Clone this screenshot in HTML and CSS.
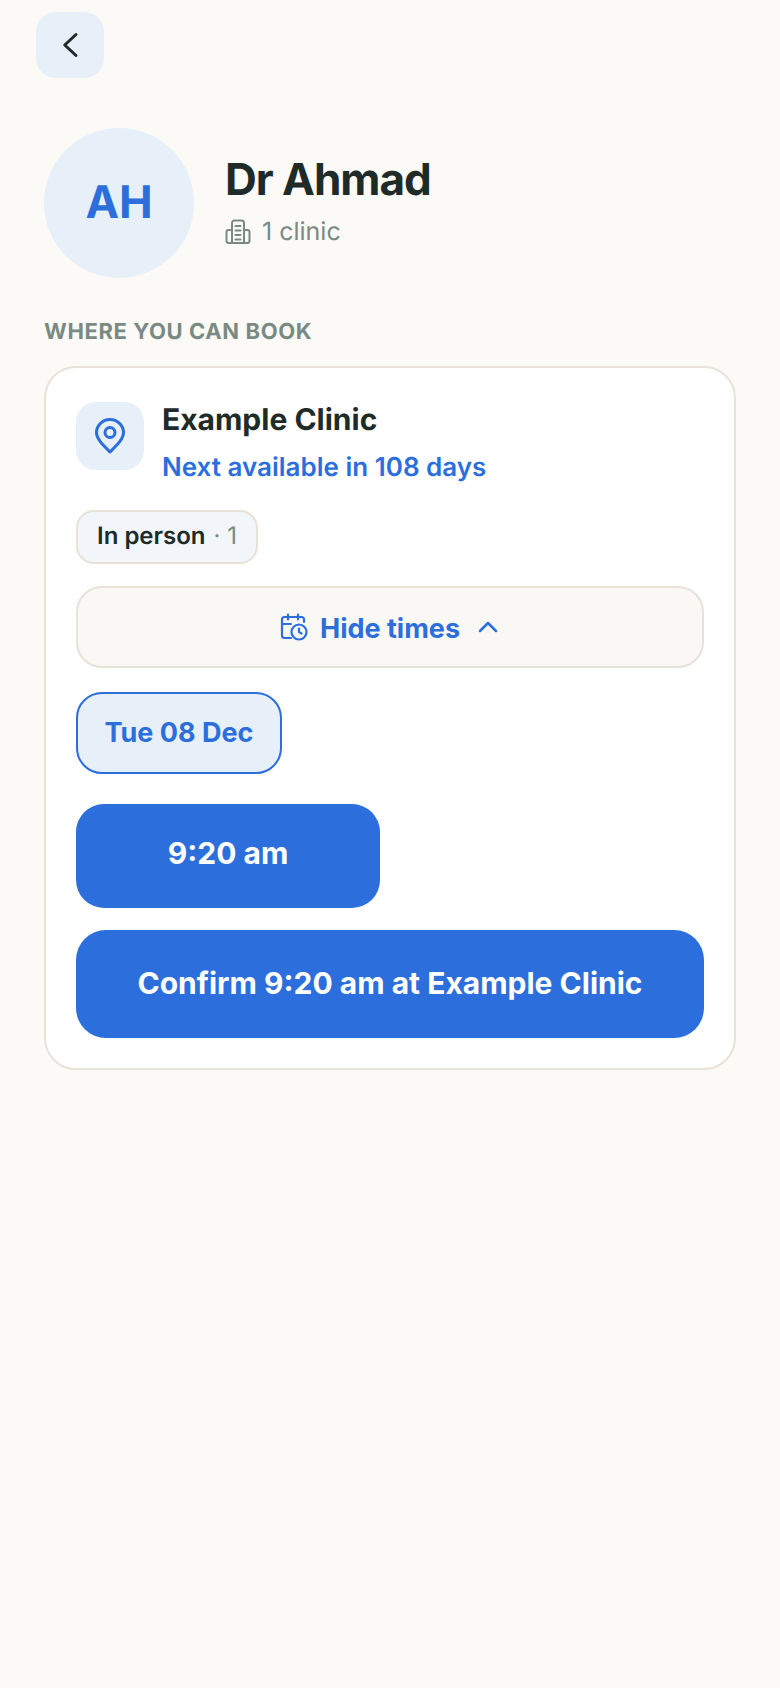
FILE: index.html
```html
<!DOCTYPE html>
<html>
<head>
  <title>Dr Ahmad</title>
  <meta charset="utf-8">
  <meta name="viewport" content="width=device-width,initial-scale=1.0">
  <link rel="stylesheet" href="styles.css">
</head>
<body>
  <div class="page">
    <button class="back-btn" type="button" aria-label="Back">
      <svg width="36" height="36" viewBox="0 0 24 24" fill="none" stroke="#1e2b28" stroke-width="2" stroke-linecap="round" stroke-linejoin="round"><path d="M16 5l-7.500 7 7.500 7"/></svg>
    </button>

    <div class="doctor">
      <div class="avatar">AH</div>
      <div class="doctor-info">
        <h1 class="doctor-name">Dr Ahmad</h1>
        <p class="doctor-sub">
          <svg width="26" height="26" viewBox="0 0 26 26" fill="none" stroke="#7a8a82" stroke-width="2" stroke-linecap="round" stroke-linejoin="round"><path d="M7 24V4a2.500 2.500 0 0 1 2.500-2.500h7A2.500 2.500 0 0 1 19 4v20"/><path d="M7 11H3.500A2 2 0 0 0 1.500 13v9a2 2 0 0 0 2 2h19a2 2 0 0 0 2-2v-9a2 2 0 0 0-2-2H19"/><path d="M10.500 7h5M10.500 11.500h5M10.500 16h5M10.500 20.500h5"/></svg>
          <span>1 clinic</span>
        </p>
      </div>
    </div>

    <h2 class="section-title">WHERE YOU CAN BOOK</h2>

    <div class="card">
      <div class="clinic">
        <div class="clinic-icon">
          <svg width="34" height="36" viewBox="0 0 34 36" fill="none" stroke="#2b6edc" stroke-width="3" stroke-linecap="round" stroke-linejoin="round"><path d="M17 34C10 27 3.500 21 3.500 14.500a13.500 13 0 0 1 27 0C30.500 21 24 27 17 34z"/><circle cx="17" cy="14.500" r="5"/></svg>
        </div>
        <div class="clinic-info">
          <div class="clinic-name">Example Clinic</div>
          <div class="clinic-next">Next available in 108 days</div>
        </div>
      </div>

      <div class="chips">
        <span class="chip">In person <span class="chip-count">· 1</span></span>
      </div>

      <button class="toggle-btn" type="button">
        <svg width="28" height="28" viewBox="0 0 28 28" fill="none" stroke="#2b6edc" stroke-width="2.200" stroke-linecap="round" stroke-linejoin="round"><path d="M11 25H4.500A2.500 2.500 0 0 1 2 22.500V6.500A2.500 2.500 0 0 1 4.500 4h17A2.500 2.500 0 0 1 24 6.500V9"/><path d="M8 1.500v5M18 1.500v5M2 11h9"/><circle cx="19" cy="19" r="7.500"/><path d="M19 15.500V19l2.500 1.500"/></svg>
        <span>Hide times</span>
        <svg class="toggle-chevron" width="24" height="24" viewBox="0 0 24 24" fill="none" stroke="#2b6edc" stroke-width="2.500" stroke-linecap="round" stroke-linejoin="round"><path d="M4 16l8-8 8 8"/></svg>
      </button>

      <button class="date-btn" type="button">Tue 08 Dec</button>

      <button class="time-btn" type="button">9:20 am</button>

      <button class="confirm-btn" type="button">Confirm 9:20 am at Example Clinic</button>
    </div>
  </div>
</body>
</html>
```

FILE: styles.css
```css
* {
  box-sizing: border-box;
}
body {
  margin: 0;
  background: #fbfaf6;
  font-family: Inter, "Liberation Sans", sans-serif;
  color: #1e2b28;
  text-rendering: geometricPrecision;
}
button {
  font-family: inherit;
  padding: 0;
  cursor: pointer;
}
.page {
  min-height: 1688px;
  padding: 12px 44px 0;
}
.back-btn {
  display: flex;
  align-items: center;
  justify-content: center;
  width: 68px;
  height: 66px;
  margin-left: -8px;
  border: 0;
  border-radius: 20px;
  background: #e7eff9;
}
.doctor {
  display: flex;
  align-items: center;
  gap: 31px;
  margin-top: 50px;
}
.avatar {
  display: flex;
  align-items: center;
  justify-content: center;
  width: 150px;
  height: 150px;
  padding-bottom: 4px;
  border-radius: 50%;
  background: #e7eff9;
  color: #2b6edc;
  font-size: 45px;
  font-weight: 700;
}
.doctor-info {
  padding-bottom: 4px;
}
.doctor-name {
  margin: 0;
  font-size: 44px;
  line-height: 54px;
  font-weight: 700;
  letter-spacing: -1px;
}
.doctor-sub {
  display: flex;
  align-items: center;
  gap: 11px;
  margin: 8px 0 0;
  color: #7a8a82;
  font-size: 25px;
  line-height: 36px;
}
.section-title {
  margin: 38px 0 0;
  color: #7a8a82;
  font-size: 22px;
  line-height: 32px;
  font-weight: 700;
  letter-spacing: 0.6px;
}
.card {
  margin-top: 18px;
  padding: 34px 30px 30px;
  border: 2px solid #e8e2d8;
  border-radius: 32px;
  background: #fff;
}
.clinic {
  display: flex;
  gap: 18px;
}
.clinic-icon {
  display: flex;
  align-items: center;
  justify-content: center;
  width: 68px;
  height: 68px;
  border-radius: 20px;
  background: #e7eff9;
}
.clinic-name {
  font-size: 30px;
  line-height: 36px;
  font-weight: 700;
}
.clinic-next {
  margin-top: 13px;
  color: #2b6edc;
  font-size: 26px;
  line-height: 34px;
  font-weight: 600;
}
.chips {
  display: flex;
  margin-top: 25px;
}
.chip {
  display: block;
  height: 54px;
  padding: 0 19px;
  border: 2px solid #e8e2d8;
  border-radius: 18px;
  background: #f2f6fb;
  font-size: 24px;
  line-height: 48px;
  font-weight: 600;
}
.chip-count {
  margin-left: 2px;
  color: #7a8a82;
  font-weight: 400;
}
.toggle-btn {
  display: flex;
  align-items: center;
  justify-content: center;
  gap: 12px;
  width: 100%;
  height: 82px;
  margin-top: 22px;
  border: 2px solid #e8e2d8;
  border-radius: 26px;
  background: #faf8f4;
  color: #2b6edc;
  font-size: 27px;
  font-weight: 700;
}
.toggle-btn span {
  padding-top: 2px;
}
.toggle-chevron {
  margin-left: 4px;
}
.date-btn {
  display: block;
  width: 206px;
  height: 82px;
  margin-top: 24px;
  padding-bottom: 2px;
  border: 2px solid #2b6edc;
  border-radius: 26px;
  background: #e7eff9;
  color: #2b6edc;
  font-size: 27px;
  font-weight: 700;
}
.time-btn {
  display: block;
  width: 304px;
  height: 104px;
  margin-top: 30px;
  padding-bottom: 6px;
  border: 0;
  border-radius: 28px;
  background: #2b6edc;
  color: #fff;
  font-size: 30px;
  font-weight: 700;
}
.confirm-btn {
  display: block;
  width: 100%;
  height: 108px;
  margin-top: 22px;
  padding-bottom: 2px;
  border: 0;
  border-radius: 30px;
  background: #2b6edc;
  color: #fff;
  font-size: 30px;
  font-weight: 700;
}
```
